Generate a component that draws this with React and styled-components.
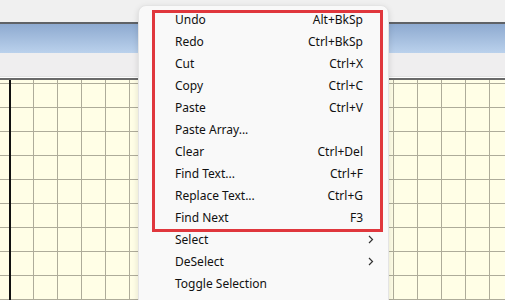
import React from "react";
import styled, { createGlobalStyle } from "styled-components";

const GlobalStyle = createGlobalStyle`
  html, body {
    margin: 0;
    padding: 0;
    width: 505px;
    height: 300px;
    overflow: hidden;
    background: #f0f0f0;
    font-family: "Noto Sans", "Open Sans", sans-serif;
  }
`;

const items = [
  { label: "Undo", key: "Alt+BkSp" },
  { label: "Redo", key: "Ctrl+BkSp" },
  { label: "Cut", key: "Ctrl+X" },
  { label: "Copy", key: "Ctrl+C" },
  { label: "Paste", key: "Ctrl+V" },
  { label: "Paste Array..." },
  { label: "Clear", key: "Ctrl+Del" },
  { label: "Find Text...", key: "Ctrl+F" },
  { label: "Replace Text...", key: "Ctrl+G" },
  { label: "Find Next", key: "F3" },
  { label: "Select", sub: true },
  { label: "DeSelect", sub: true },
  { label: "Toggle Selection" },
];

const App = () => {
  return (
    <>
      <GlobalStyle />
      <Screen>
        <TopStrip />
        <TitleBar />
        <Toolbar />
        <Sheet>
          <Margin />
        </Sheet>

        <Menu>
          {items.map((it) => (
            <Item key={it.label}>
              <Label>{it.label}</Label>
              <Shortcut>{it.key}</Shortcut>
              <Arrow>
                {it.sub && (
                  <svg width="6" height="9" viewBox="0 0 6 9">
                    <path d="M1 1 L4.5 4.5 L1 8" fill="none" stroke="#333" strokeWidth="1.2" />
                  </svg>
                )}
              </Arrow>
            </Item>
          ))}
        </Menu>
        <Highlight />
      </Screen>
    </>
  );
};

export default App;

const Screen = styled.div`
  position: relative;
  width: 505px;
  height: 300px;
  display: flex;
  flex-direction: column;
  overflow: hidden;
`;

const TopStrip = styled.div`
  height: 22px;
  background: #f0f0f0;
  border-bottom: 2px solid #5f6266;
`;

const TitleBar = styled.div`
  height: 29px;
  background: linear-gradient(#8eaad0, #bad1ec);
`;

const Toolbar = styled.div`
  height: 24px;
  background: #efeeef;
  border-bottom: 1px solid #ffffff;
  box-shadow: inset 0 -1px 0 #e3e3e3;
`;

const Sheet = styled.div`
  flex: 1;
  position: relative;
  border-top: 2px solid #6a6a6a;
  background-color: #fffee6;
  background-image: linear-gradient(90deg, #aeac9a 1px, transparent 1px),
    linear-gradient(#aeac9a 1px, transparent 1px);
  background-size: 24px 24px;
  background-position: 9px 27px;
`;

const Margin = styled.div`
  width: 2px;
  height: 100%;
  margin-left: 9px;
  background: #111;
`;

const Menu = styled.div`
  position: absolute;
  left: 138px;
  top: 5px;
  width: 251px;
  height: 320px;
  padding-top: 2px;
  box-sizing: border-box;
  background: #f9f9f9;
  border: 1px solid #e4e4e4;
  border-radius: 8px;
  box-shadow: 0 2px 6px rgba(0, 0, 0, 0.12);
`;

const Item = styled.div`
  height: 22px;
  display: flex;
  align-items: center;
  padding-left: 36px;
  font-size: 12px;
  color: #111;
`;

const Label = styled.span`
  flex: 1;
  white-space: nowrap;
`;

const Shortcut = styled.span`
  white-space: nowrap;
`;

const Arrow = styled.span`
  width: 25px;
  display: flex;
  justify-content: flex-end;
  padding-right: 14px;
  box-sizing: border-box;
`;

const Highlight = styled.div`
  position: absolute;
  left: 152px;
  top: 10px;
  width: 231px;
  height: 222px;
  box-sizing: border-box;
  border: 3px solid #e0373d;
`;
